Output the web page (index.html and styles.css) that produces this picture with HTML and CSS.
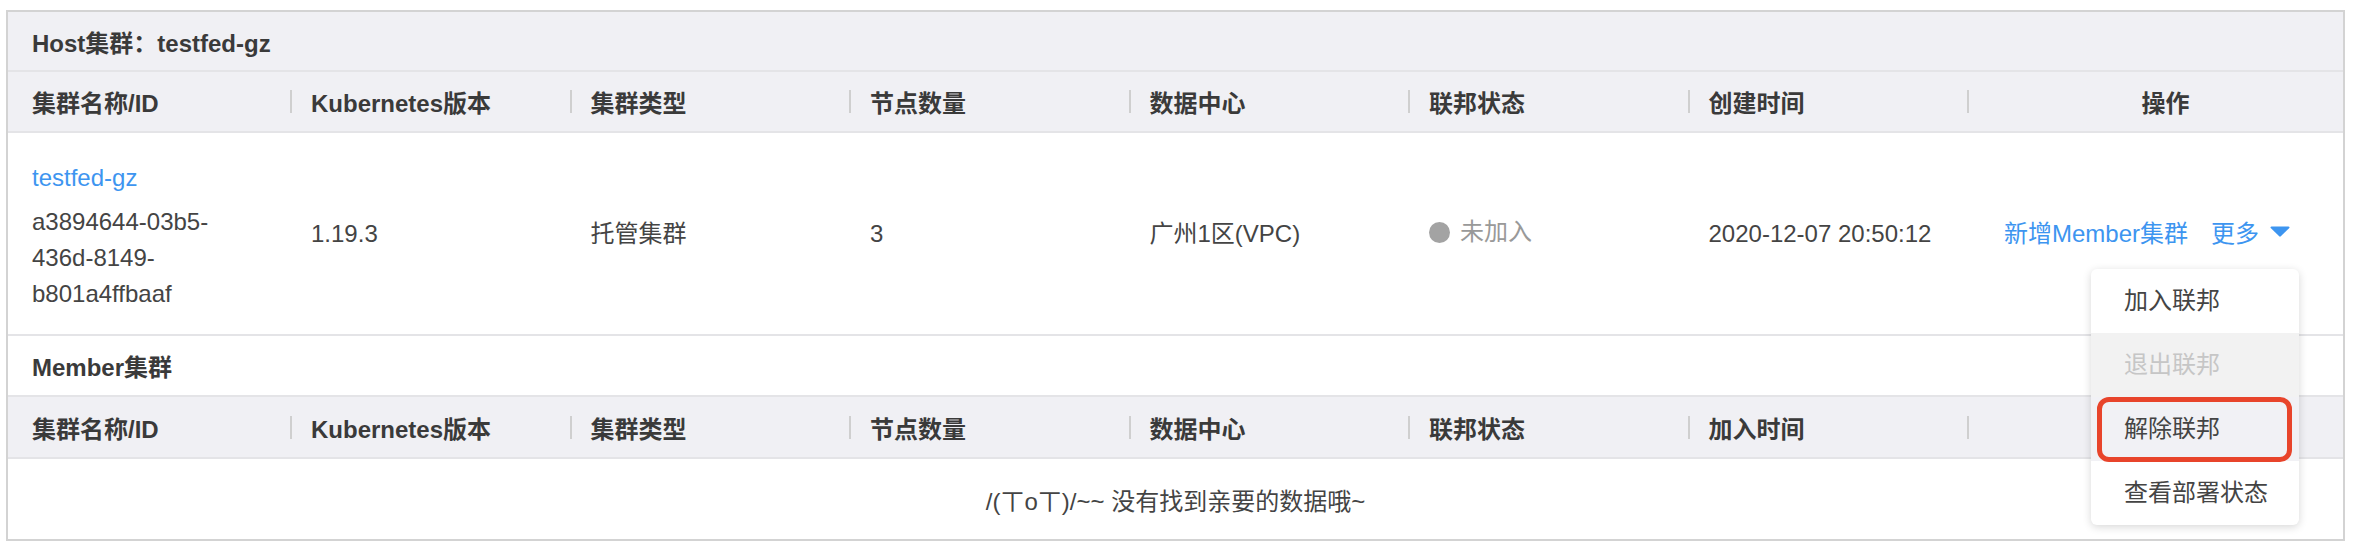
FILE: index.html
```html
<!DOCTYPE html>
<html lang="zh-CN">
<head>
    <meta charset="UTF-8">
    <meta name="viewport" content="width=device-width, initial-scale=1.0">
    <title>集群联邦</title>
    <link rel="stylesheet" href="styles.css">
</head>
<body>
    <div class="panel">
        <!-- Host cluster -->
        <div class="group-title is-grey">Host集群：testfed-gz</div>
        <div class="row head">
            <div class="cell">集群名称/ID</div>
            <div class="cell">Kubernetes版本</div>
            <div class="cell">集群类型</div>
            <div class="cell">节点数量</div>
            <div class="cell">数据中心</div>
            <div class="cell">联邦状态</div>
            <div class="cell">创建时间</div>
            <div class="cell op"><span class="op-title">操作</span></div>
        </div>
        <div class="row body">
            <div class="cell name">
                <a href="#" class="link">testfed-gz</a>
                <div class="cluster-id">a3894644-<wbr>03b5-<wbr>436d-<wbr>8149-<wbr>b801a4ffbaaf</div>
            </div>
            <div class="cell">1.19.3</div>
            <div class="cell">托管集群</div>
            <div class="cell">3</div>
            <div class="cell">广州1区(VPC)</div>
            <div class="cell"><span class="status"><i class="dot"></i>未加入</span></div>
            <div class="cell">2020-12-07 20:50:12</div>
            <div class="cell op">
                <a href="#" class="link">新增Member集群</a>
                <span class="more">
                    <a href="#" class="link">更多</a>
                    <svg class="caret" width="20" height="11" viewBox="0 0 20 11">
                        <path d="M1.5 0.5h17a1 1 0 0 1 .8 1.6l-8.5 8.2a1.2 1.2 0 0 1-1.6 0L.7 2.1A1 1 0 0 1 1.5.5z" fill="#3d95f0"/>
                    </svg>
                    <ul class="menu">
                        <li>加入联邦</li>
                        <li class="is-disabled">退出联邦</li>
                        <li class="is-hover is-marked">解除联邦</li>
                        <li>查看部署状态</li>
                    </ul>
                </span>
            </div>
        </div>

        <!-- Member clusters -->
        <div class="group-title member">Member集群</div>
        <div class="row head member-head">
            <div class="cell">集群名称/ID</div>
            <div class="cell">Kubernetes版本</div>
            <div class="cell">集群类型</div>
            <div class="cell">节点数量</div>
            <div class="cell">数据中心</div>
            <div class="cell">联邦状态</div>
            <div class="cell">加入时间</div>
            <div class="cell op"></div>
        </div>
        <div class="empty">/(ㄒoㄒ)/~~ 没有找到亲要的数据哦~</div>
    </div>
</body>
</html>
```

FILE: styles.css
```css
/* General */
body {
    margin: 0;
    font-family: "Liberation Sans", "Noto Sans CJK SC", sans-serif;
    font-size: 24px;
    color: #444;
    background: #fff;
}

.link {
    color: #3d95f0;
    text-decoration: none;
}

/* Panel */
.panel {
    margin: 10px 23px 0 6px;
    border: 2px solid #d3d3d3;
}

.group-title {
    display: flex;
    align-items: center;
    height: 58px;
    padding-left: 24px;
    font-weight: 700;
    color: #3a3a3a;
    border-bottom: 2px solid #e4e4e7;
}

.group-title.is-grey {
    background: #f0f0f4;
}

.group-title.member {
    height: 59px;
}

/* Rows */
.row {
    display: grid;
    grid-template-columns: 282px repeat(6, 279.5px) 1fr;
    border-bottom: 2px solid #e4e4e7;
}

.head {
    height: 59px;
    background: #f0f0f4;
}

.member-head {
    height: 60px;
}

.head .cell {
    display: flex;
    align-items: center;
    font-weight: 700;
    color: #3a3a3a;
    white-space: nowrap;
}

.head .cell::before {
    content: "";
    flex: none;
    width: 2px;
    height: 23px;
    margin-right: 19px;
    background: #cfcfcf;
}

.head .cell:first-child {
    padding-left: 24px;
}

.head .cell:first-child::before {
    display: none;
}

.op-title {
    flex: 1;
    text-align: center;
}

.body {
    align-items: center;
    line-height: 36px;
}

.body .cell {
    padding-left: 21px;
}

.body .cell.name {
    padding: 27px 24px 22px;
}

.name .link {
    display: block;
    margin-bottom: 8px;
}

.cluster-id {
    max-width: 230px;
}

/* Status */
.status {
    display: inline-flex;
    align-items: center;
    color: #999;
}

.dot {
    width: 21px;
    height: 21px;
    margin-right: 10px;
    border-radius: 50%;
    background: #a3a3a3;
}

/* Operations */
.body .cell.op {
    display: flex;
    justify-content: center;
    align-items: center;
    gap: 23px;
    padding: 0 16px 0 0;
}

.more {
    position: relative;
    display: inline-flex;
    align-items: center;
    gap: 11px;
}

.caret {
    margin-bottom: 5px;
}

/* Dropdown */
.menu {
    position: absolute;
    top: calc(100% + 17px);
    right: -9px;
    z-index: 2;
    width: 208px;
    margin: 0;
    padding: 0;
    list-style: none;
    background: #fff;
    border-radius: 6px;
    box-shadow: 0 2px 8px rgba(0, 0, 0, 0.16);
}

.menu li {
    position: relative;
    height: 64px;
    line-height: 64px;
    padding-left: 33px;
    color: #444;
    white-space: nowrap;
}

.menu li.is-disabled {
    color: #c6c6c6;
    background: #f2f2f2;
}

.menu li.is-hover {
    background: #f1f1f5;
}

.menu li.is-marked::after {
    content: "";
    position: absolute;
    top: 0;
    right: 7px;
    bottom: -1px;
    left: 6px;
    border: 5px solid #e8442b;
    border-radius: 12px;
}

/* Empty state */
.empty {
    display: flex;
    justify-content: center;
    align-items: center;
    height: 80px;
    color: #444;
}
```
